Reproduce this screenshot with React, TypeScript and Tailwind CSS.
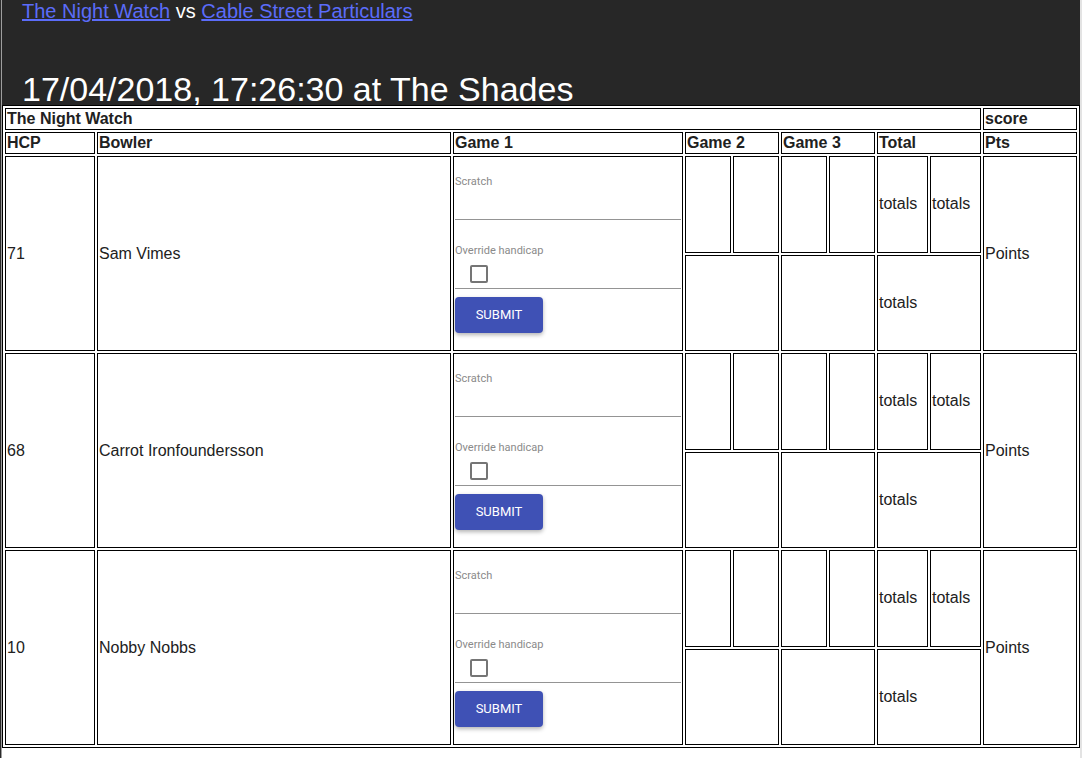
const BOWLERS = [
  { hcp: 71, name: "Sam Vimes" },
  { hcp: 68, name: "Carrot Ironfoundersson" },
  { hcp: 10, name: "Nobby Nobbs" },
];

const cell = "border border-black p-[1px] align-middle text-left";

function ScoreForm() {
  return (
    <div className="flex h-[191px] flex-col justify-center">
      {/* Scratch input */}
      <div className="flex h-[45px] flex-col border-b border-[#949494] pt-[1px]">
        <div className="font-['Roboto',sans-serif] text-[11px] leading-[12px] text-[#8a8a8a]">Scratch</div>
      </div>

      {/* Override handicap */}
      <div className="flex flex-col border-b border-[#949494] pt-[25px] pb-[5px]">
        <div className="font-['Roboto',sans-serif] text-[11px] leading-[12px] text-[#8a8a8a]">Override handicap</div>
        <div className="ml-[15px] mt-[8px] h-[18px] w-[18px] rounded-[2px] border-2 border-[#757575]" />
      </div>

      <button className="mt-[8px] h-[36px] w-[88px] rounded-[4px] bg-[#3f51b5] font-['Roboto',sans-serif] text-[13px] text-white shadow-[0_2px_4px_rgba(0,0,0,0.3)]">
        SUBMIT
      </button>
    </div>
  );
}

export default function App() {
  return (
    <div className="flex h-[758px] w-[1082px] overflow-hidden bg-white font-['Liberation_Sans',Arial,sans-serif] text-[#212121]">
      <div className="w-[1px] bg-[#2b2b2b]" />
      <div className="w-[1px] bg-[#9e9e9e]" />

      <div className="flex w-[1078px] flex-col">
        {/* Header */}
        <div className="h-[105px] overflow-hidden bg-[#272727] pl-[20px]">
          <div className="text-[20px] leading-[23px] text-white">
            <a href="#" className="text-[#5b6cf9] underline">The Night Watch</a> vs{" "}
            <a href="#" className="text-[#5b6cf9] underline">Cable Street Particulars</a>
          </div>
          <h1 className="mt-[47px] text-[34px] leading-[1.15] text-white">17/04/2018, 17:26:30 at The Shades</h1>
        </div>

        {/* Score table */}
        <table className="w-[1078px] table-fixed border-separate border-spacing-[2px] border border-black text-[16px] leading-[18px]">
          <colgroup>
            <col className="w-[90px]" />
            <col className="w-[354px]" />
            <col className="w-[230px]" />
            <col className="w-[46px]" />
            <col className="w-[46px]" />
            <col className="w-[46px]" />
            <col className="w-[46px]" />
            <col className="w-[51px]" />
            <col className="w-[51px]" />
            <col className="w-[94px]" />
          </colgroup>
          <tbody>
            <tr>
              <td colSpan={9} className={`${cell} font-bold`}>The Night Watch</td>
              <td className={`${cell} font-bold`}>score</td>
            </tr>
            <tr>
              <td className={`${cell} font-bold`}>HCP</td>
              <td className={`${cell} font-bold`}>Bowler</td>
              <td className={`${cell} font-bold`}>Game 1</td>
              <td colSpan={2} className={`${cell} font-bold`}>Game 2</td>
              <td colSpan={2} className={`${cell} font-bold`}>Game 3</td>
              <td colSpan={2} className={`${cell} font-bold`}>Total</td>
              <td className={`${cell} font-bold`}>Pts</td>
            </tr>
            {BOWLERS.map((b) => [
              <tr key={b.name + "-a"}>
                <td rowSpan={2} className={cell}>{b.hcp}</td>
                <td rowSpan={2} className={cell}>{b.name}</td>
                <td rowSpan={2} className={cell}>
                  <ScoreForm />
                </td>
                <td className={cell} />
                <td className={cell} />
                <td className={cell} />
                <td className={cell} />
                <td className={cell}>totals</td>
                <td className={cell}>totals</td>
                <td rowSpan={2} className={cell}>Points</td>
              </tr>,
              <tr key={b.name + "-b"}>
                <td colSpan={2} className={cell} />
                <td colSpan={2} className={cell} />
                <td colSpan={2} className={cell}>totals</td>
              </tr>,
            ])}
          </tbody>
        </table>
      </div>

      <div className="w-[2px] bg-[#e3e3e3]" />
    </div>
  );
}
